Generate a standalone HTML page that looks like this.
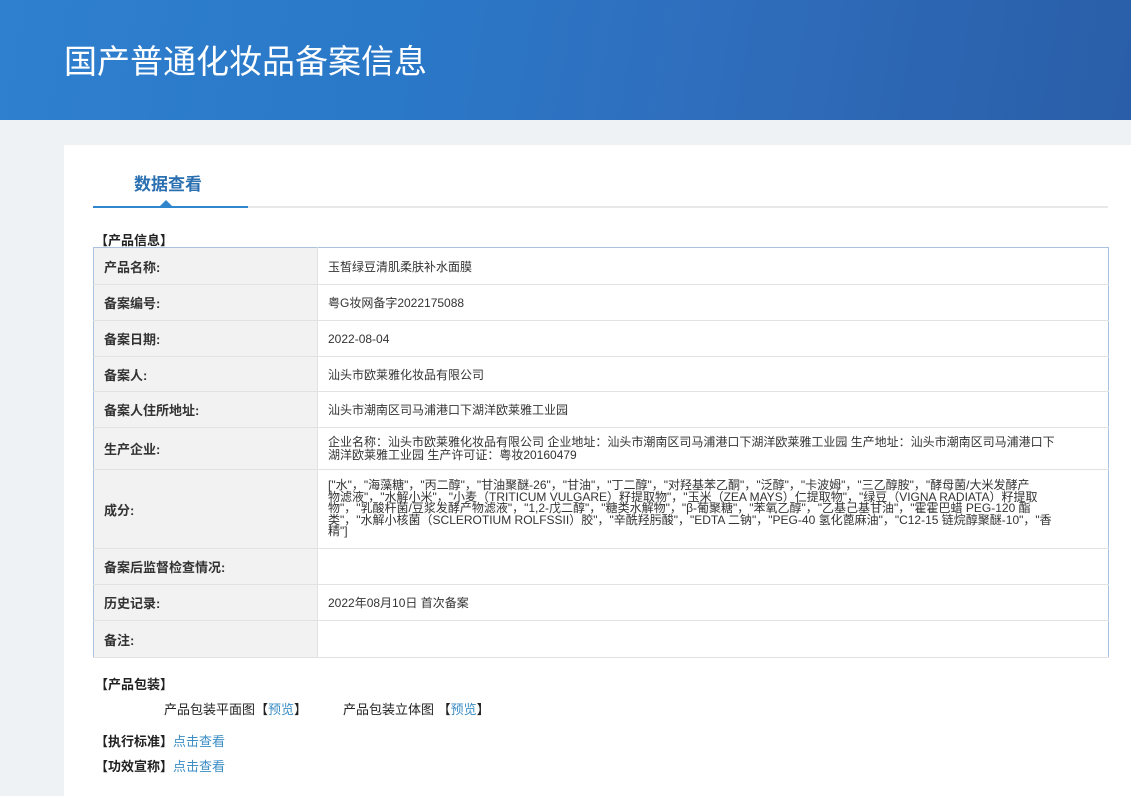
<!DOCTYPE html>
<html><head><meta charset="utf-8"><style>
*{margin:0;padding:0;box-sizing:border-box}
body{width:1131px;height:796px;overflow:hidden;background:#eef2f5;font-family:"Liberation Sans","Noto Sans CJK SC",sans-serif;color:#333;position:relative}
.hdr{position:absolute;left:0;top:0;width:1131px;height:120px;background:linear-gradient(100deg,#2f80cf 0%,#2a78c8 35%,#2f6fbe 60%,#2a5ea8 100%)}
.hdr h1{position:absolute;left:64px;top:35px;font-size:33px;font-weight:normal;color:#fff}
.card{position:absolute;left:64px;top:145px;width:1067px;height:651px;background:#fff}
.tab{position:absolute;left:134px;top:170px;font-size:17px;font-weight:bold;color:#2a6fb0}
.line{position:absolute;left:93px;top:206px;width:1015px;height:2px;background:#e8e8e8}
.line2{position:absolute;left:93px;top:206px;width:155px;height:2px;background:#2f86cc}
.tri{position:absolute;left:160px;top:200px;width:0;height:0;border-left:6px solid transparent;border-right:6px solid transparent;border-bottom:6px solid #2f86cc}
.sec{position:absolute;font-size:13px;font-weight:bold;color:#222}
table{position:absolute;left:93px;top:247px;width:1016px;border-collapse:collapse;border:1px solid #a9c3de;font-size:12px}
td{border-bottom:1px solid #e2e2e2;vertical-align:middle}
td.l{width:224px;background:#f2f2f2;font-weight:bold;font-size:13px;color:#333;padding-left:10px;border-right:1px solid #e2e2e2}
td.v{padding-left:10px;color:#333}
.ing{line-height:11.6px;white-space:nowrap;font-size:12px}
.a{color:#3b8dc4}
.t{position:absolute;font-size:13px;color:#222}
</style></head><body>
<div class="hdr"><h1>国产普通化妆品备案信息</h1></div>
<div class="card"></div>
<div class="tab">数据查看</div>
<div class="line"></div><div class="line2"></div><div class="tri"></div>
<div class="sec" style="left:95px;top:230px">【产品信息】</div>
<table>
<tr style="height:37px"><td class="l">产品名称:</td><td class="v">玉皙绿豆清肌柔肤补水面膜</td></tr>
<tr style="height:36px"><td class="l">备案编号:</td><td class="v">粤G妆网备字2022175088</td></tr>
<tr style="height:36px"><td class="l">备案日期:</td><td class="v">2022-08-04</td></tr>
<tr style="height:35px"><td class="l">备案人:</td><td class="v">汕头市欧莱雅化妆品有限公司</td></tr>
<tr style="height:36px"><td class="l">备案人住所地址:</td><td class="v">汕头市潮南区司马浦港口下湖洋欧莱雅工业园</td></tr>
<tr style="height:42px"><td class="l">生产企业:</td><td class="v" style="line-height:13px;white-space:nowrap">企业名称：汕头市欧莱雅化妆品有限公司 企业地址：汕头市潮南区司马浦港口下湖洋欧莱雅工业园 生产地址：汕头市潮南区司马浦港口下<br>湖洋欧莱雅工业园 生产许可证：粤妆20160479</td></tr>
<tr style="height:79px"><td class="l">成分:</td><td class="v ing">["水"，"海藻糖"，"丙二醇"，"甘油聚醚-26"，"甘油"，"丁二醇"，"对羟基苯乙酮"，"泛醇"，"卡波姆"，"三乙醇胺"，"酵母菌/大米发酵产<br>物滤液"，"水解小米"，"小麦（TRITICUM VULGARE）籽提取物"，"玉米（ZEA MAYS）仁提取物"，"绿豆（VIGNA RADIATA）籽提取<br>物"，"乳酸杆菌/豆浆发酵产物滤液"，"1,2-戊二醇"，"糖类水解物"，"β-葡聚糖"，"苯氧乙醇"，"乙基己基甘油"，"霍霍巴蜡 PEG-120 酯<br>类"，"水解小核菌（SCLEROTIUM ROLFSSII）胶"，"辛酰羟肟酸"，"EDTA 二钠"，"PEG-40 氢化蓖麻油"，"C12-15 链烷醇聚醚-10"，"香<br>精"]</td></tr>
<tr style="height:36px"><td class="l">备案后监督检查情况:</td><td class="v"></td></tr>
<tr style="height:36px"><td class="l">历史记录:</td><td class="v">2022年08月10日 首次备案</td></tr>
<tr style="height:37px"><td class="l">备注:</td><td class="v"></td></tr>
</table>
<div class="sec" style="left:95px;top:674px">【产品包装】</div>
<div class="t" style="left:164px;top:699px">产品包装平面图【<span class="a">预览</span>】</div>
<div class="t" style="left:343px;top:699px">产品包装立体图 【<span class="a">预览</span>】</div>
<div class="sec" style="left:95px;top:731px">【执行标准】</div>
<div class="t a" style="left:173px;top:731px;color:#3b8dc4">点击查看</div>
<div class="sec" style="left:95px;top:756px">【功效宣称】</div>
<div class="t a" style="left:173px;top:756px;color:#3b8dc4">点击查看</div>
</body></html>
